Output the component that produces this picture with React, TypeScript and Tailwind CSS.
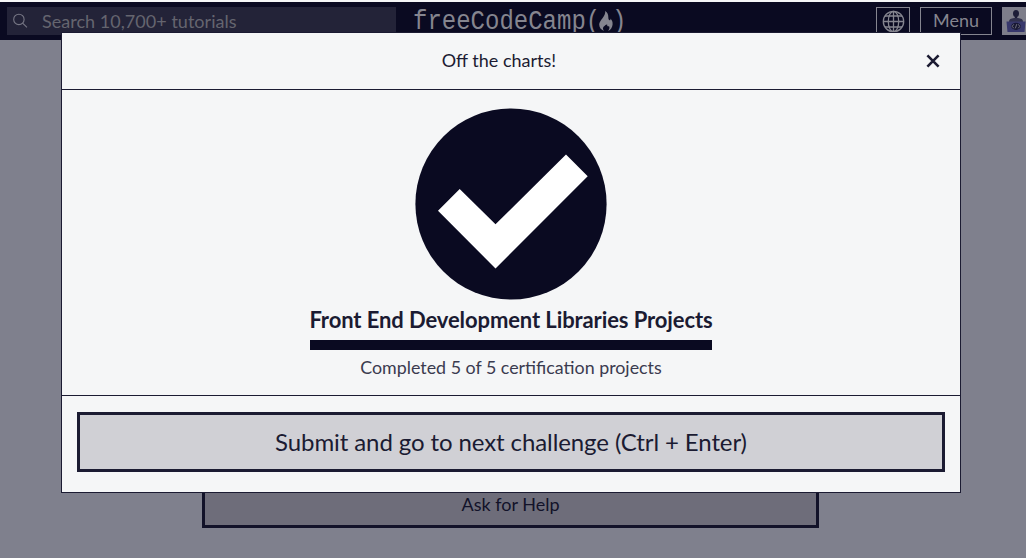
import React from "react";

function SearchBar() {
  return (
    <div className="flex h-7 w-[389px] shrink-0 items-center bg-[#232338] pl-[5px] text-[#65656f]">
      <svg width="16" height="16" viewBox="0 0 16 16" fill="none" stroke="#777785" strokeWidth="1.1">
        <circle cx="6.9" cy="6.4" r="5.2" />
        <path d="M10.6 10.1 L15 14.4" />
      </svg>
      <span className="ml-[14px] text-[18px] leading-7 tracking-[0.03px] whitespace-nowrap">Search 10,700+ tutorials</span>
    </div>
  );
}

function Logo() {
  return (
    <div className="ml-[17px] flex h-7 w-[212px] shrink-0 items-center text-[#85858f]">
      <span className="mt-[2px] w-[187px] origin-left scale-y-115 font-['Liberation_Mono',monospace] text-[24px] leading-7 whitespace-pre">
        freeCodeCamp(
      </span>
      <svg className="-mt-[1px] -ml-[1px] shrink-0" width="14" height="20" viewBox="0 0 14 20" fill="#85858f">
        <path d="M6.2 0 C8.6 1.6 9.4 4 9.3 6 C9.3 8.5 10.2 9.6 11.1 9.2 C11.6 8.9 11.6 8.2 11.3 7.6 C13 9.2 13.8 11 13.6 13.4 C13.3 16.4 11.8 18.6 9 20 C10.4 18.3 10.9 16.6 10 15 C9.2 15.8 8.1 15.4 8.2 13.4 C6.8 13.2 5.9 14.4 4.8 15.6 C3.6 17 3.8 18.6 5 20 C2 18.8 0.2 16.6 0.2 13.6 C0.2 9.5 7 5 6.2 0 Z" />
      </svg>
      <span className="mt-[2px] -ml-[1px] scale-y-115 font-['Liberation_Mono',monospace] text-[24px] leading-7">)</span>
    </div>
  );
}

function Header() {
  return (
    <header className="flex h-[38px] items-start overflow-hidden bg-[#0a0a21] pt-[5px] pl-[7px]">
      <SearchBar />
      <Logo />
      <button className="ml-[251px] flex h-7 w-[34px] shrink-0 items-center justify-center border border-[#85858f]">
        <svg width="23" height="23" viewBox="0 0 23 23" fill="none" stroke="#85858f" strokeWidth="1.3">
          <circle cx="11.5" cy="11.5" r="10.2" />
          <ellipse cx="11.5" cy="11.5" rx="5.2" ry="10.2" />
          <path d="M11.5 1.3 V21.7 M1.3 11.5 H21.7 M3 6 H20 M3 17 H20" />
        </svg>
      </button>
      <button className="ml-[10px] h-7 w-[72px] shrink-0 border border-[#85858f] pb-[1px] text-[18px] leading-[25px] text-[#85858f]">
        Menu
      </button>
      <div className="ml-[10px] h-7 w-7 shrink-0 bg-[#7e7e8a]">
        <svg width="28" height="28" viewBox="0 0 28 28">
          <ellipse cx="14" cy="6.4" rx="3" ry="3.5" fill="#1d1d37" />
          <path d="M12.8 9 H15.2 V12 H12.8 Z" fill="#1d1d37" />
          <path d="M7 14.5 C7 12.3 9 11.4 12 11 H16 C19 11.4 21 12.3 21 14.5 V16 H7 Z" fill="#30304b" />
          <path d="M4.5 14.5 H23.5 L22.5 25 H5.5 Z" fill="#38386c" />
          <ellipse cx="14" cy="19.3" rx="4.8" ry="3.6" fill="#171733" />
          <path d="M11.8 17.3 L10.2 19.3 L11.8 21.3 M16.2 17.3 L17.8 19.3 L16.2 21.3 M14.7 17.2 L13.4 21.3" fill="none" stroke="#85858f" strokeWidth="0.8" />
        </svg>
      </div>
    </header>
  );
}

function CompletionDialog() {
  return (
    <div
      role="dialog"
      className="absolute top-8 left-[61px] flex h-[461px] w-[900px] flex-col border border-[#1b1b32] bg-[#f5f6f7] text-[#1b1b32]"
    >
      <div className="flex h-[57px] shrink-0 items-center border-b border-[#1b1b32] pr-[18px] pl-3">
        <h2 className="flex-1 pb-[2px] text-center text-[18px] leading-6">Off the charts!</h2>
        <button aria-label="Close" className="flex h-[18px] w-[18px] items-center justify-center">
          <svg width="14" height="14" viewBox="0 0 14 14" stroke="#1b1b32" strokeWidth="2.6">
            <path d="M1.4 1.4 L12.6 12.6 M12.6 1.4 L1.4 12.6" />
          </svg>
        </button>
      </div>
      <div className="flex h-[306px] shrink-0 flex-col items-center border-b border-[#1b1b32] pt-[18px]">
        <svg className="shrink-0" width="192" height="192" viewBox="0 0 192 192">
          <circle cx="96" cy="96" r="95.6" fill="#0a0a21" />
          <path d="M23 102.7 L44.7 81 L80.5 116.3 L151 46.5 L172.7 68.3 L80.5 160.5 Z" fill="#fff" />
        </svg>
        <div className="flex flex-col items-center">
          <p className="mt-[5px] text-[22px] leading-[30px] font-bold tracking-[-0.1px] whitespace-nowrap">
            Front End Development Libraries Projects
          </p>
          <div className="mt-[5px] h-[10px] w-[402px] bg-[#0a0a21]" />
          <p className="mt-[4px] text-[17.83px] leading-[26px] text-[#3b3b4f]">Completed 5 of 5 certification projects</p>
        </div>
      </div>
      <div className="px-[15px] pt-4">
        <button className="h-[60px] w-full border-[3px] border-[#1b1b32] bg-[#d0d0d5] text-[24px] leading-[54px] tracking-[-0.1px]">
          Submit and go to next challenge (Ctrl + Enter)
        </button>
      </div>
    </div>
  );
}

export default function App() {
  return (
    <div className="relative flex h-[558px] w-[1026px] flex-col overflow-hidden bg-[#7f808d] font-['Lato',sans-serif]">
      <div className="h-[2px] shrink-0 bg-[#f5f6f7]" />
      <Header />
      <main className="flex flex-1 flex-col justify-end pb-[30px] pl-[202px]">
        <button className="h-[46px] w-[617px] border-[3px] border-[#121229] bg-[#6e6d7a] pb-[2px] text-[18px] leading-[38px] text-[#121229]">
          Ask for Help
        </button>
      </main>
      <CompletionDialog />
    </div>
  );
}
